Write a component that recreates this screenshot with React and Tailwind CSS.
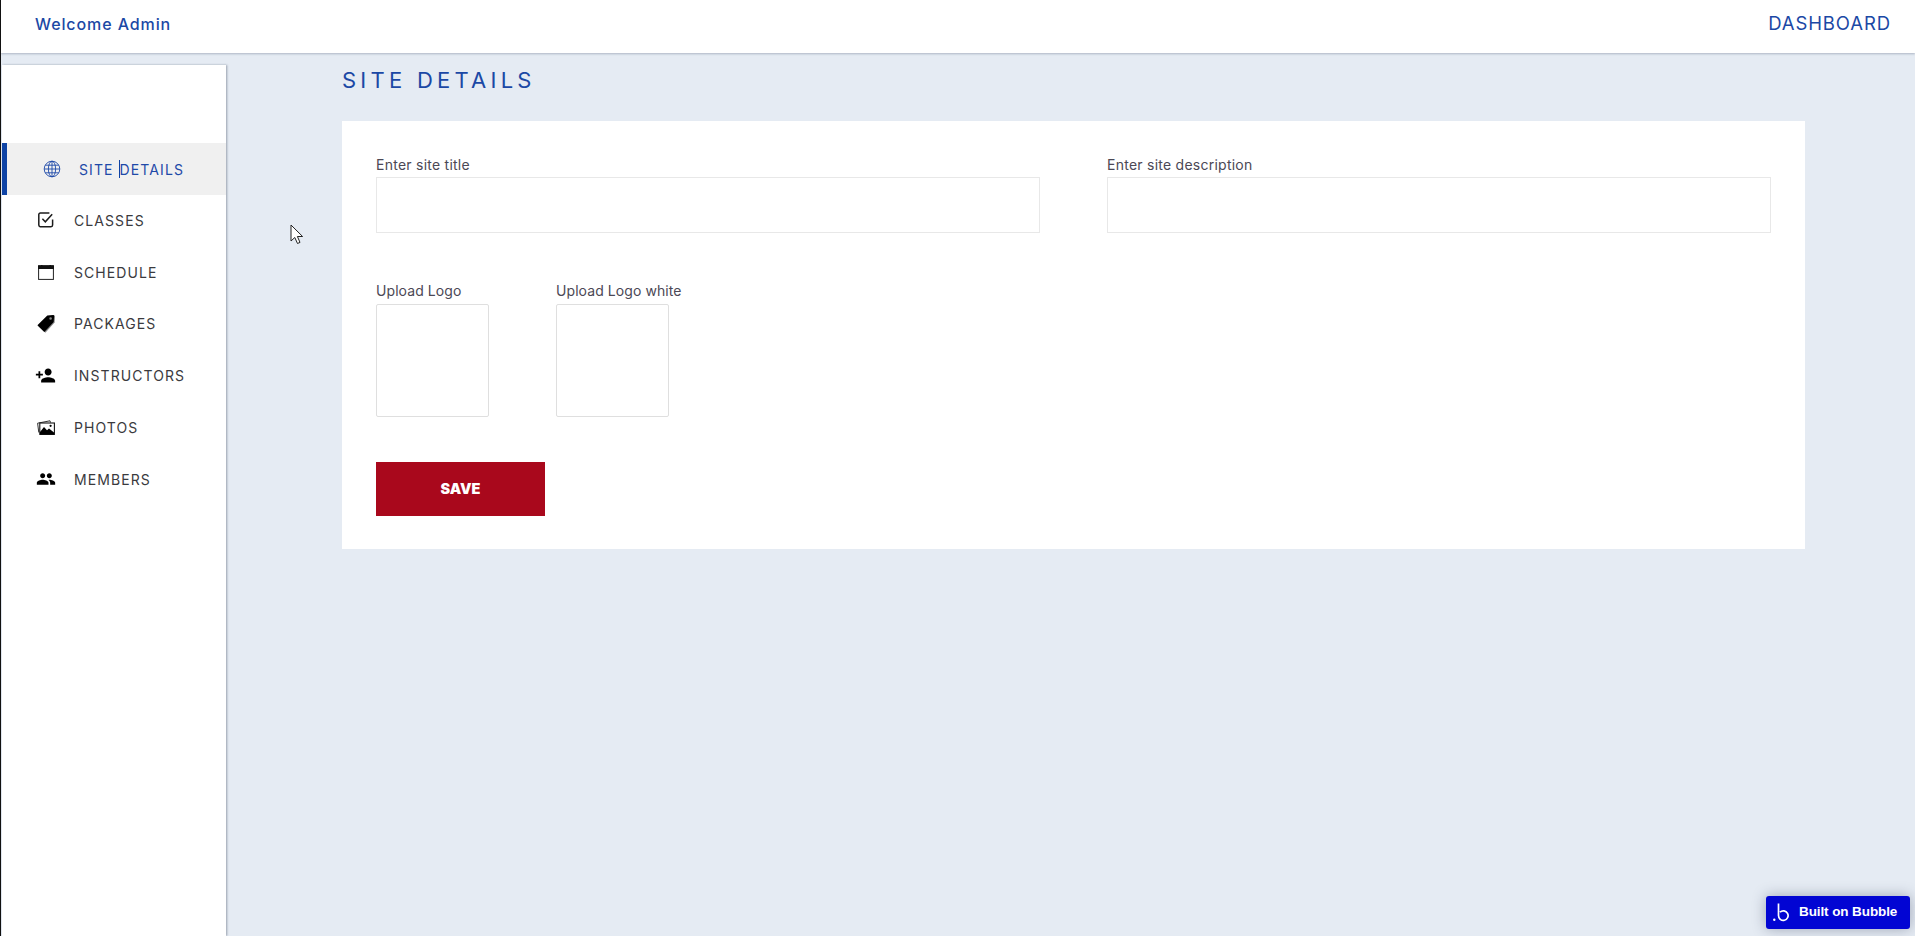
import React from "react";
import { MdPersonAdd, MdPeople } from "react-icons/md";

const Globe = () => (
  <svg width="18" height="18" viewBox="0 0 18 18" fill="none" stroke="#1e49a8" strokeWidth="0.9">
    <circle cx="9" cy="9" r="7.8" />
    <ellipse cx="9" cy="9" rx="3.6" ry="7.8" />
    <path d="M9 1.2v15.6M1.2 9h15.6M2.3 5.2h13.4M2.3 12.8h13.4" />
  </svg>
);
const Check = () => (
  <svg width="16" height="16" viewBox="0 0 16 16" fill="none" stroke="#1c1c1c" strokeWidth="1.5">
    <path d="M14.6 7.5v5.6a1.6 1.6 0 0 1-1.6 1.6H2.1A1.6 1.6 0 0 1 .8 13.1V2.6A1.6 1.6 0 0 1 2.4 1h9" />
    <path d="M4.4 6.8l2.9 3 6.9-7.6" />
  </svg>
);
const Calendar = () => (
  <svg width="16" height="15" viewBox="0 0 16 15">
    <rect x="0.6" y="0.6" width="14.8" height="13.8" fill="#fff" stroke="#222" strokeWidth="1" />
    <path d="M0 0.8h3V0h1.5v.8h7V0H13v.8h3V4H0z" fill="#111" />
  </svg>
);
const Tag = () => (
  <svg width="18" height="18" viewBox="0 0 18 18">
    <path d="M10.6.6 17 .2c.4 0 .7.3.7.7l-.5 6.3L8 17.3.7 10.6z" fill="#888" transform="translate(.4 .4)" />
    <path d="M10.3.5 16.4.1c.4 0 .7.3.7.7l-.4 6.2L7.3 17 .4 10.3zM13.6 2.2a1.3 1.3 0 1 0 0 2.6 1.3 1.3 0 0 0 0-2.6z" fill="#000" fillRule="evenodd" />
  </svg>
);
const Photos = () => (
  <svg width="18" height="15" viewBox="0 0 18 15">
    <path d="M1.8 12.5.6 3.2 13 .8l.5 1.7" fill="none" stroke="#333" strokeWidth="1" />
    <rect x="2.8" y="3" width="14.6" height="11.4" fill="#fff" stroke="#111" strokeWidth="1.1" />
    <path d="M3 14.5V12l4-5 3 3.2 2-1.6 5 3.8v2.1z" fill="#000" />
    <circle cx="13.6" cy="5.8" r="1.1" fill="#000" />
  </svg>
);
const Bubble = () => (
  <svg width="17" height="19" viewBox="0 0 17 19" fill="none" stroke="#fff" strokeWidth="1.7">
    <path d="M5.5 .5v12a4.8 4.8 0 1 0 1.5-3.4" />
    <circle cx="1.3" cy="16.8" r="1.2" fill="#fff" stroke="none" />
  </svg>
);

const items = [
  ["CLASSES", <Check />],
  ["SCHEDULE", <Calendar />],
  ["PACKAGES", <Tag />],
  ["INSTRUCTORS", <MdPersonAdd size={21} color="#000" />],
  ["PHOTOS", <Photos />],
  ["MEMBERS", <MdPeople size={20} color="#000" />],
];

export default function App() {
  return (
    <div className="relative h-[936px] w-[1915px] overflow-hidden border-l border-[#111] bg-[#e5ebf3] font-['Inter',sans-serif]">
      <header className="flex h-[53px] items-center justify-between bg-white pb-[5px] pl-[34px] pr-[24px] shadow-[0_1px_2px_rgba(70,80,110,0.35)]">
        <span className="text-[16px] font-medium tracking-[0.9px] text-[#1b48a5]">Welcome Admin</span>
        <span className="text-[18.5px] tracking-[0.9px] text-[#1b48a5]">DASHBOARD</span>
      </header>

      <div className="flex h-[883px]">
        <aside className="ml-px mt-[12px] flex h-[871px] w-[224px] shrink-0 flex-col bg-white pt-[78px] shadow-[1px_0_2px_rgba(60,70,90,0.45)]">
          <div className="flex h-[52px] items-center border-l-[5px] border-[#0e43a5] bg-[#f0f0f0]">
            <span className="ml-[36px] flex w-[18px] justify-center"><Globe /></span>
            <span className="ml-[18px] text-[14px] tracking-[1.1px] text-[#1e49a8]">SITE</span>
            <span className="ml-[5px] h-[18px] w-px bg-[#0e43a5]"></span>
            <span className="text-[14px] tracking-[1.1px] text-[#1e49a8]">DETAILS</span>
          </div>
          {items.map(([label, icon]) => (
            <div key={label} className="flex h-[51.8px] items-center pb-px">
              <span className="flex w-[72px] shrink-0 items-center justify-center pl-[15px]">{icon}</span>
              <span className="text-[14px] tracking-[1.08px] text-[#3a3a3e]">{label}</span>
            </div>
          ))}
        </aside>

        <main className="pl-[116px]">
          <h1 className="mt-[16px] h-[22px] text-[22px] font-normal leading-[22px] tracking-[4.25px] text-[#1b48a5]">SITE DETAILS</h1>
          <section className="mt-[30px] h-[428px] w-[1463px] bg-white px-[34px] pt-[33px]">
            <div className="flex gap-[67px]">
              <Field label="Enter site title" />
              <Field label="Enter site description" />
            </div>
            <div className="mt-[48px] flex gap-[67px]">
              <Upload label="Upload Logo" />
              <Upload label="Upload Logo white" />
            </div>
            <button className="mt-[45px] block h-[54px] w-[169px] bg-[#a9081c] text-[14.5px] font-black text-white">SAVE</button>
          </section>
        </main>
      </div>

      <svg className="absolute left-[289px] top-[224px]" width="14" height="21" viewBox="0 0 14 21">
        <path d="M1 1v16l3.8-3.5 2.7 6 2.5-1.1-2.6-5.9h5.2z" fill="#fff" stroke="#222" strokeWidth="1" />
      </svg>

      <div className="absolute bottom-[7px] right-[5px] flex h-[33px] w-[144px] items-center rounded-[3px] bg-[#0205d3] pl-[7px] shadow-[0_0_14px_rgba(50,60,90,0.4)]">
        <Bubble />
        <span className="ml-[9px] font-['Liberation_Sans',sans-serif] text-[13.5px] font-bold tracking-[-0.1px] text-white">Built on Bubble</span>
      </div>
    </div>
  );
}

function Field({ label }) {
  return (
    <div className="w-[664px]">
      <label className="block h-[23px] text-[14px] leading-[21px] tracking-[0.25px] text-[#4b4855]">{label}</label>
      <div className="h-[56px] border border-[#e8e8e8] bg-white"></div>
    </div>
  );
}

function Upload({ label }) {
  return (
    <div className="w-[113px]">
      <label className="block h-[23px] whitespace-nowrap text-[14px] leading-[20px] tracking-[0.08px] text-[#4b4855]">{label}</label>
      <div className="h-[113px] w-[113px] rounded-[2px] border border-[#dfdfdf] bg-white"></div>
    </div>
  );
}
